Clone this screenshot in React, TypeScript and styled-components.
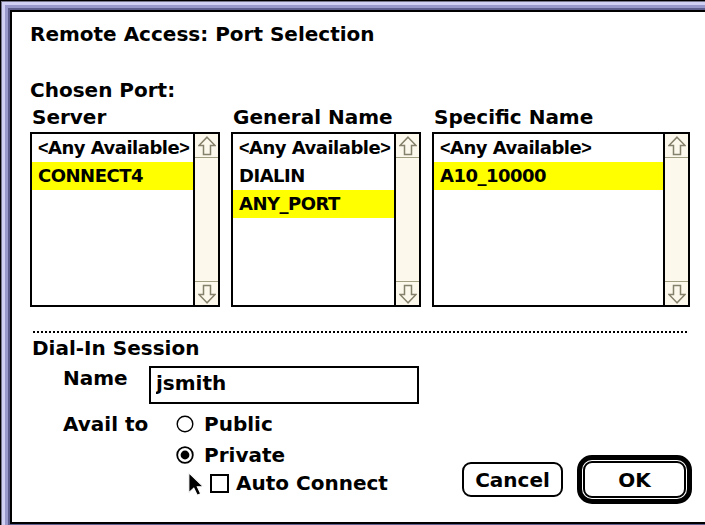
import React from "react";
import styled, { createGlobalStyle } from "styled-components";

const ink = "#000";
const scrollTrack = "#fcf8ec";
const scrollLine = "#a29e82";
const scrollArrow = "#85816a";
const highlight = "#ffff00";

interface PortColumn {
  title: string;
  width: number;
  items: string[];
  selected: number;
}

const portColumns: PortColumn[] = [
  {
    title: "Server",
    width: 190,
    items: ["<Any Available>", "CONNECT4"],
    selected: 1,
  },
  {
    title: "General Name",
    width: 190,
    items: ["<Any Available>", "DIALIN", "ANY_PORT"],
    selected: 2,
  },
  {
    title: "Specific Name",
    width: 258,
    items: ["<Any Available>", "A10_10000"],
    selected: 1,
  },
];

// the system font draws < and > narrow, so give them a slimmer face
const renderItem = (text: string) => {
  if (text.startsWith("<") && text.endsWith(">")) {
    return (
      <>
        <Angle>&lt;</Angle>
        {text.slice(1, -1)}
        <Angle>&gt;</Angle>
      </>
    );
  }
  return text;
};

const ScrollArrow: React.FC<{ down?: boolean }> = ({ down }) => (
  <ArrowSvg $down={down} width="18" height="20" viewBox="0 0 18 20">
    <path
      d="M9 1.2 L17 9.5 L12.5 9.5 L12.5 18.5 L5.5 18.5 L5.5 9.5 L1 9.5 Z"
      fill="none"
      stroke={scrollArrow}
      strokeWidth="1.5"
    />
  </ArrowSvg>
);

const RadioMark: React.FC<{ on?: boolean }> = ({ on }) => (
  <svg width="18" height="18" viewBox="0 0 18 18">
    <circle
      cx="9"
      cy="9"
      r="7.8"
      fill="#fff"
      stroke={ink}
      strokeWidth={on ? 1.8 : 1.4}
    />
    {on && <circle cx="9" cy="9" r="4.4" fill={ink} />}
  </svg>
);

const Pointer = () => (
  <PointerSvg width="16" height="24" viewBox="0 0 11 16.5">
    <path
      d="M0.6 0.6 L0.6 14.2 L4 11 L6.4 16 L8.7 15 L6.4 10.2 L10.6 10.2 Z"
      fill={ink}
      stroke="#fff"
      strokeWidth="0.7"
      strokeLinejoin="miter"
    />
  </PointerSvg>
);

const App: React.FC = () => {
  return (
    <>
      <GlobalStyle />
      <Window>
        <Title>Remote Access: Port Selection</Title>
        <ChosenLabel>Chosen Port:</ChosenLabel>
        <Columns>
          {portColumns.map((col) => (
            <Column key={col.title} $width={col.width}>
              <ColumnTitle>{col.title}</ColumnTitle>
              <ListBox>
                <ListItems>
                  {col.items.map((item, i) => (
                    <ListRow key={item} $selected={i === col.selected}>
                      {renderItem(item)}
                    </ListRow>
                  ))}
                </ListItems>
                <ScrollBar>
                  <ArrowBox $dir="up">
                    <ScrollArrow />
                  </ArrowBox>
                  <ArrowBox $dir="down">
                    <ScrollArrow down />
                  </ArrowBox>
                </ScrollBar>
              </ListBox>
            </Column>
          ))}
        </Columns>

        <Dotted />
        <SectionTitle>Dial-In Session</SectionTitle>

        <SessionBody>
          <Fields>
            <FieldRow>
              <FieldLabel $width={86}>Name</FieldLabel>
              <NameInput defaultValue="jsmith" readOnly />
            </FieldRow>
            <FieldRow $space={8}>
              <FieldLabel $width={114}>Avail to</FieldLabel>
              <Choices>
                <Choice>
                  <RadioMark />
                  Public
                </Choice>
                <Choice $space={7}>
                  <RadioMark on />
                  Private
                </Choice>
                <CheckRow>
                  <Pointer />
                  <CheckBox />
                  Auto Connect
                </CheckRow>
              </Choices>
            </FieldRow>
          </Fields>

          <Buttons>
            <PushButton $w={101} $h={35}>
              Cancel
            </PushButton>
            <DefaultRing>
              <PushButton $w={103} $h={37}>
                OK
              </PushButton>
            </DefaultRing>
          </Buttons>
        </SessionBody>
      </Window>
    </>
  );
};

const GlobalStyle = createGlobalStyle`
  *, *::before, *::after {
    box-sizing: border-box;
  }

  html, body {
    margin: 0;
    padding: 0;
    overflow: hidden;
    background: #fff;
  }

  body {
    font-family: "DejaVu Sans", "Liberation Sans", sans-serif;
    font-weight: bold;
    font-size: 20px;
    line-height: 24px;
    color: ${ink};
  }
`;

const Window = styled.div`
  width: 720px;
  height: 534px;
  border: 1px solid ${ink};
  background: #fff;
  box-shadow: inset 0 0 0 1px #77778c, inset 0 0 0 4px #d0d0f4,
    inset 0 0 0 7px #9999cc, inset 0 0 0 9px #5e5e8e, inset 0 0 0 11px ${ink};
  padding: 21px 0 0 29px;
`;

const Title = styled.div`
  height: 24px;
`;

const ChosenLabel = styled.div`
  margin-top: 32px;
  height: 24px;
`;

const Columns = styled.div`
  display: flex;
  gap: 11px;
  margin-top: 3px;
`;

const Column = styled.div<{ $width: number }>`
  width: ${({ $width }) => $width}px;
  display: flex;
  flex-direction: column;
`;

const ColumnTitle = styled.div`
  padding-left: 2px;
  height: 24px;
  margin-bottom: 3px;
`;

const ListBox = styled.div`
  height: 175px;
  border: 2px solid ${ink};
  display: flex;
  background: #fff;
`;

const ListItems = styled.div`
  flex: 1;
  min-width: 0;
  display: flex;
  flex-direction: column;
`;

const ListRow = styled.div<{ $selected: boolean }>`
  height: 28px;
  line-height: 28px;
  padding-left: 6px;
  font-size: 18px;
  letter-spacing: -0.5px;
  white-space: nowrap;
  overflow: hidden;
  background: ${({ $selected }) => ($selected ? highlight : "transparent")};
`;

const Angle = styled.span`
  font-family: "Liberation Sans", sans-serif;
`;

const ScrollBar = styled.div`
  width: 25px;
  flex: none;
  border-left: 2px solid ${ink};
  background: ${scrollTrack};
  display: flex;
  flex-direction: column;
  justify-content: space-between;
`;

const ArrowBox = styled.div<{ $dir: "up" | "down" }>`
  height: 24px;
  display: flex;
  align-items: center;
  justify-content: center;
  ${({ $dir }) =>
    $dir === "up"
      ? `border-bottom: 1px solid ${scrollLine};`
      : `border-top: 1px solid ${scrollLine};`}
`;

const ArrowSvg = styled.svg<{ $down?: boolean }>`
  display: block;
  transform: ${({ $down }) => ($down ? "rotate(180deg)" : "none")};
`;

const Dotted = styled.div`
  width: 655px;
  height: 2px;
  margin: 24px 0 0 3px;
  background: repeating-linear-gradient(
    to right,
    ${ink} 0 2px,
    transparent 2px 4px
  );
`;

const SectionTitle = styled.div`
  margin-top: 3px;
  padding-left: 2px;
  height: 24px;
`;

const SessionBody = styled.div`
  width: 662px;
  margin-top: 6px;
  display: flex;
  align-items: flex-end;
`;

const Fields = styled.div`
  padding: 0 0 9px 33px;
  display: flex;
  flex-direction: column;
`;

const FieldRow = styled.div<{ $space?: number }>`
  display: flex;
  align-items: flex-start;
  margin-top: ${({ $space = 0 }) => $space}px;
`;

const FieldLabel = styled.div<{ $width: number }>`
  width: ${({ $width }) => $width}px;
  flex: none;
  height: 24px;
`;

const NameInput = styled.input`
  width: 270px;
  height: 38px;
  border: 2px solid ${ink};
  border-radius: 0;
  padding: 0 5px 5px;
  margin: 0;
  font: inherit;
  color: ${ink};
  background: #fff;
  outline: none;
`;

const Choices = styled.div`
  display: flex;
  flex-direction: column;
`;

const Choice = styled.div<{ $space?: number }>`
  display: flex;
  align-items: center;
  gap: 10px;
  height: 24px;
  margin: ${({ $space = 0 }) => $space}px 0 0 -1px;

  svg {
    display: block;
    flex: none;
  }
`;

const CheckRow = styled.div`
  position: relative;
  display: flex;
  align-items: center;
  gap: 7px;
  height: 24px;
  margin: 4px 0 0 33px;
`;

const CheckBox = styled.span`
  width: 19px;
  height: 19px;
  border: 2px solid ${ink};
  background: #fff;
  flex: none;
`;

const PointerSvg = styled.svg`
  position: absolute;
  left: -22px;
  top: 1px;
  display: block;
`;

const Buttons = styled.div`
  margin-left: auto;
  display: flex;
  align-items: center;
  gap: 14px;
`;

const PushButton = styled.button<{ $w: number; $h: number }>`
  width: ${({ $w }) => $w}px;
  height: ${({ $h }) => $h}px;
  border: 2px solid ${ink};
  border-radius: 9px;
  background: #fff;
  color: ${ink};
  font: inherit;
  padding: 0;
  margin: 0;
`;

const DefaultRing = styled.div`
  border: 5px solid ${ink};
  border-radius: 15px;
  padding: 1px;
  display: flex;
`;

export default App;
